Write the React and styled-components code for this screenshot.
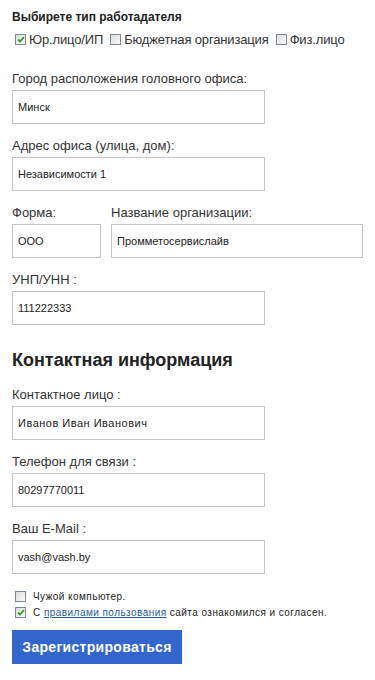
import React from "react";
import styled, { createGlobalStyle } from "styled-components";

const Global = createGlobalStyle`
  html, body { margin: 0; padding: 0; background: #fff; }
  body { font-family: "Liberation Sans", Arial, sans-serif; color: #333; }
  * { box-sizing: border-box; }
`;

const Page = styled.form`
  padding: 10px 12px 0 12px;
  width: 375px;
`;

const Title = styled.div`
  font-size: 12px;
  font-weight: bold;
  line-height: 14px;
  color: #222;
`;

const TypeRow = styled.div`
  display: flex;
  align-items: center;
  height: 16px;
  margin-top: 7px;
  font-size: 13px;
  letter-spacing: -0.15px;
  color: #333;
`;

const TypeOption = styled.label`
  display: flex;
  align-items: center;
  gap: 3px;
  margin-right: 4px;
  padding-left: 3px;
`;

const Box = styled.span`
  display: inline-flex;
  align-items: center;
  justify-content: center;
  width: 11px;
  height: 11px;
  border: 1px solid #7a8a99;
  background: linear-gradient(135deg, #dcdcdc, #fbfbfb);
  flex-shrink: 0;
`;

const Check = ({ checked }) => (
  <Box>
    {checked && (
      <svg width="8" height="7" viewBox="0 0 8 7">
        <path d="M1 3.5 L3 5.5 L7 1.2" fill="none" stroke="#3a9a2a" strokeWidth="1.8" />
      </svg>
    )}
  </Box>
);

const Fields = styled.div`
  margin-top: ${(p) => p.$top || 0}px;
  display: flex;
  flex-direction: column;
  gap: 15px;
`;

const Row = styled.div`
  display: flex;
  gap: 10px;
`;

const Field = styled.div`
  display: flex;
  flex-direction: column;
  width: ${(p) => p.$w}px;
`;

const Label = styled.div`
  font-size: 13px;
  line-height: 14px;
  color: #333;
  margin-bottom: 4px;
  white-space: nowrap;
`;

const Input = styled.div`
  height: 34px;
  border: 1px solid #c4c4c4;
  display: flex;
  align-items: center;
  padding-left: 5px;
  font-size: 11px;
  color: #222;
  letter-spacing: ${(p) => p.$ls || 0}px;
  font-family: "Liberation Sans", Arial, sans-serif;
`;

const Heading = styled.h2`
  margin: 24px 0 17px 0;
  font-size: 18px;
  line-height: 22px;
  font-weight: bold;
  color: #222;
  font-family: "Liberation Sans", Arial, sans-serif;
`;

const Agree = styled.div`
  margin-top: 14px;
  display: flex;
  flex-direction: column;
`;

const AgreeRow = styled.label`
  display: flex;
  align-items: center;
  height: 16px;
  padding-left: 3px;
  gap: 7px;
  font-size: 10px;
  letter-spacing: 0.45px;
  color: #222;
`;

const Link = styled.a`
  color: #2a5a96;
  text-decoration: underline;
`;

const Button = styled.button`
  margin-top: 10px;
  width: 170px;
  height: 34px;
  border: none;
  background: #3366cc;
  color: #fff;
  font-family: "Liberation Sans", Arial, sans-serif;
  font-weight: bold;
  font-size: 14px;
  letter-spacing: 0.3px;
  padding: 0;
  display: block;
`;

export default function App() {
  return (
    <>
      <Global />
      <Page>
        <Title>Выбирете тип работадателя</Title>
        <TypeRow>
          <TypeOption><Check checked />Юр.лицо/ИП</TypeOption>
          <TypeOption><Check />Бюджетная организация</TypeOption>
          <TypeOption><Check />Физ.лицо</TypeOption>
        </TypeRow>
        <Fields $top={25}>
          <Field $w={253}>
            <Label>Город расположения головного офиса:</Label>
            <Input>Минск</Input>
          </Field>
          <Field $w={253}>
            <Label>Адрес офиса (улица, дом):</Label>
            <Input>Независимости 1</Input>
          </Field>
          <Row>
            <Field $w={89}>
              <Label>Форма:</Label>
              <Input>ООО</Input>
            </Field>
            <Field $w={252}>
              <Label>Название организации:</Label>
              <Input>Промметосервислайв</Input>
            </Field>
          </Row>
          <Field $w={253}>
            <Label>УНП/УНН :</Label>
            <Input>111222333</Input>
          </Field>
        </Fields>
        <Heading>Контактная информация</Heading>
        <Fields>
          <Field $w={253}>
            <Label>Контактное лицо :</Label>
            <Input $ls={0.5}>Иванов Иван Иванович</Input>
          </Field>
          <Field $w={253}>
            <Label>Телефон для связи :</Label>
            <Input>80297770011</Input>
          </Field>
          <Field $w={253}>
            <Label>Ваш E-Mail :</Label>
            <Input>vash@vash.by</Input>
          </Field>
        </Fields>
        <Agree>
          <AgreeRow><Check />Чужой компьютер.</AgreeRow>
          <AgreeRow><Check checked /><span>С <Link href="#">правилами пользования</Link> сайта ознакомился и согласен.</span></AgreeRow>
        </Agree>
        <Button type="button">Зарегистрироваться</Button>
      </Page>
    </>
  );
}
